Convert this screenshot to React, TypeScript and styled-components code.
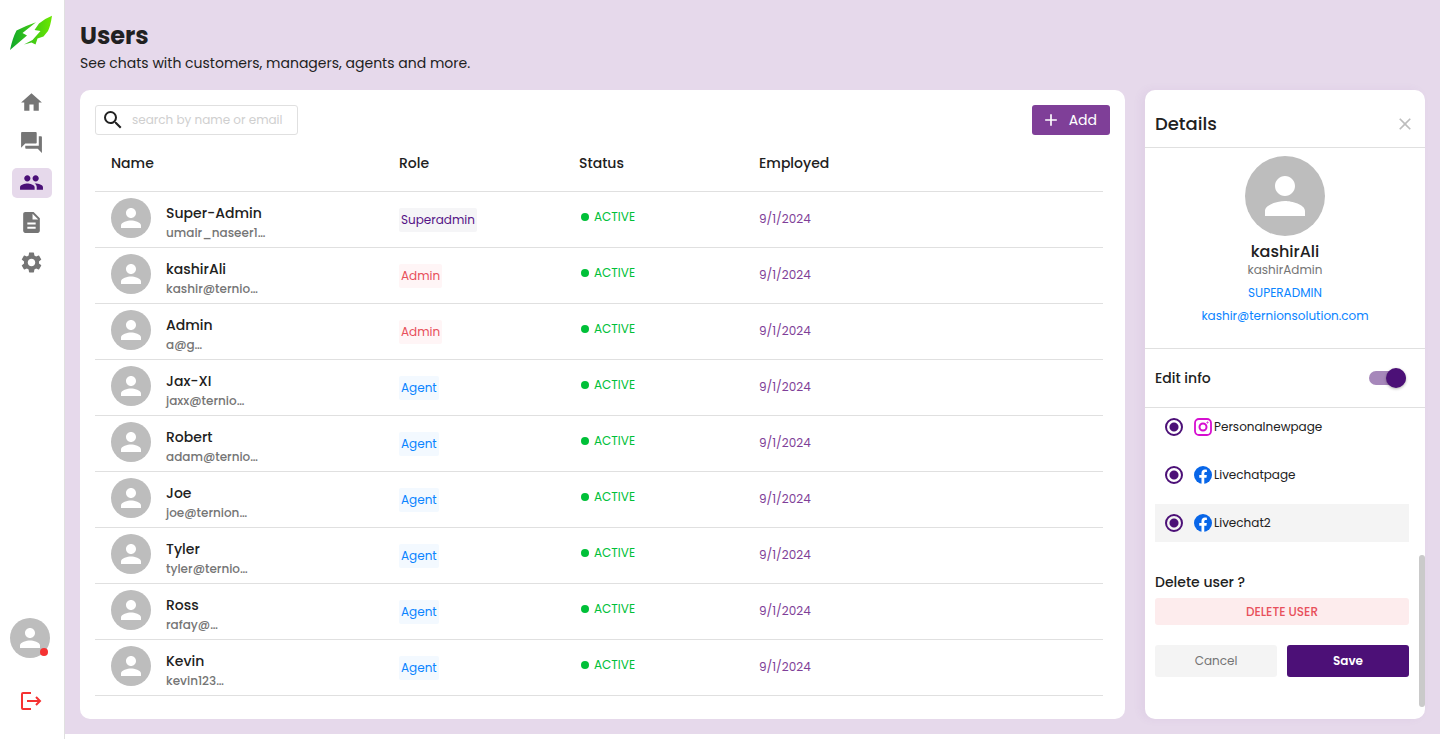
import React from "react";
import styled, { createGlobalStyle } from "styled-components";
import { MdHome, MdForum, MdPeople, MdDescription, MdSettings, MdSearch, MdPerson, MdAdd, MdClose } from "react-icons/md";

const Global = createGlobalStyle`
  *, *::before, *::after { box-sizing: border-box; }
  body { margin: 0; background: #fff; color: #212121; font-family: Poppins, Inter, "Noto Sans", sans-serif; font-size: 14px; line-height: 20px; }
  h1, h2, h3, p { margin: 0; }
  button, input { font: inherit; }
`;

const Shell = styled.div`
  display: flex;
  min-height: 100vh;
`;

const Sidebar = styled.aside`
  flex: 0 0 65px;
  display: flex;
  flex-direction: column;
  align-items: center;
  padding: 14px 0 28px;
  border-right: 1px solid #e0e0e0;
`;

const Logo = styled.svg`
  display: block;
  width: 48px;
  height: 38px;
  margin-bottom: 36px;
`;

const Nav = styled.nav`
  display: flex;
  flex-direction: column;
  gap: 10px;
  margin-bottom: auto;
`;

const NavLink = styled.a<{ $active?: boolean }>`
  display: flex;
  align-items: center;
  justify-content: center;
  width: 40px;
  height: 30px;
  padding: 0 1px 1px 0;
  border-radius: 5px;
  color: ${(p) => (p.$active ? "#4a1077" : "#757575")};
  background: ${(p) => (p.$active ? "#e6d9eb" : "transparent")};
  font-size: 25px;
`;

const Avatar = styled.span<{ $size: number }>`
  flex: none;
  display: flex;
  align-items: center;
  justify-content: center;
  width: ${(p) => p.$size}px;
  height: ${(p) => p.$size}px;
  border-radius: 50%;
  background: #bdbdbd;
  color: #fff;
  svg { width: 75%; height: 75%; }
`;

const Account = styled.div`
  position: relative;
  margin: 0 5px 33px 0;
`;

const Badge = styled.span`
  position: absolute;
  right: 2px;
  bottom: 2px;
  width: 8px;
  height: 8px;
  border-radius: 50%;
  background: #f53232;
`;

const IconButton = styled.button`
  display: flex;
  padding: 0;
  border: 0;
  background: none;
  color: #bdbdbd;
  font-size: 20px;
  cursor: pointer;
`;

const Main = styled.main`
  flex: 1;
  min-width: 0;
  display: flex;
  flex-direction: column;
  margin-bottom: 5px;
  padding: 20px 15px 15px;
  background: #e6d9eb;
`;

const Heading = styled.h1`
  font-size: 24px;
  line-height: 32px;
  font-weight: 700;
`;

const Subtitle = styled.p`
  font-size: 14px;
  line-height: 22px;
  margin-bottom: 16px;
`;

const Columns = styled.div`
  flex: 1;
  display: flex;
  gap: 20px;
`;

const Card = styled.section`
  flex: 1;
  min-width: 0;
  padding: 15px;
  border-radius: 10px;
  background: #fff;
`;

const Toolbar = styled.div`
  display: flex;
  justify-content: space-between;
`;

const SearchBox = styled.label`
  display: flex;
  align-items: center;
  gap: 7px;
  width: 203px;
  height: 30px;
  padding: 0 5px;
  border: 1px solid #e0e0e0;
  border-radius: 3px;
  svg { flex: none; font-size: 24px; }
`;

const SearchInput = styled.input`
  width: 100%;
  min-width: 0;
  padding: 0;
  border: 0;
  outline: 0;
  font-size: 12px;
  &::placeholder { color: #cfcfcf; opacity: 1; }
`;

const AddButton = styled.button`
  display: flex;
  align-items: center;
  gap: 8px;
  height: 30px;
  padding: 0 13px 0 9px;
  border: 0;
  border-radius: 3px;
  background: #7f3f98;
  color: #fff;
  font-size: 14px;
  font-weight: 400;
  svg { font-size: 20px; }
`;

const Table = styled.table`
  width: calc(100% - 7px);
  table-layout: fixed;
  border-collapse: separate;
  border-spacing: 0;
`;

const Th = styled.th<{ $width?: number }>`
  width: ${(p) => (p.$width ? p.$width + "px" : "auto")};
  height: 57px;
  padding: 0 16px;
  border-bottom: 1px solid #e0e0e0;
  text-align: left;
  font-weight: 500;
`;

const Td = styled.td`
  height: 56px;
  padding: 0 16px;
  border-bottom: 1px solid #e0e0e0;
  vertical-align: middle;
`;

const Person = styled.div`
  display: flex;
  align-items: flex-start;
  gap: 15px;
  height: 44px;
`;

const PersonText = styled.div`
  padding-top: 5px;
  min-width: 0;
`;

const PersonName = styled.div`
  font-weight: 500;
`;

const PersonMail = styled.div`
  color: #757575;
  font-size: 12px;
  font-weight: 500;
`;

type Tone = "super" | "admin" | "agent";
const tones: Record<Tone, [string, string]> = {
  super: ["#551486", "#f5f5f7"],
  admin: ["#e8505b", "#fff5f6"],
  agent: ["#0a84ff", "#f3f9ff"],
};

const Role = styled.span<{ $tone: Tone }>`
  display: inline-block;
  padding: 2px;
  border-radius: 2px;
  color: ${(p) => tones[p.$tone][0]};
  background: ${(p) => tones[p.$tone][1]};
  font-size: 12px;
`;

const Status = styled.span`
  display: flex;
  align-items: center;
  gap: 5px;
  padding: 0 0 5px 2px;
  color: #00c038;
  font-size: 12px;
  &::before {
    content: "";
    width: 8px;
    height: 8px;
    border-radius: 50%;
    background: currentColor;
  }
`;

const Joined = styled.time`
  display: block;
  padding-bottom: 2px;
  color: #7f3f98;
  font-size: 12px;
`;

const Details = styled.aside`
  position: relative;
  flex: 0 0 280px;
  border-radius: 10px;
  background: #fff;
  box-shadow: -4px 0 10px rgba(127, 63, 152, 0.06);
`;

const DetailsHeader = styled.header`
  display: flex;
  align-items: center;
  justify-content: space-between;
  height: 58px;
  padding: 10px 10px 0 10px;
  border-bottom: 1px solid #e0e0e0;
`;

const DetailsTitle = styled.h2`
  font-size: 18px;
  font-weight: 500;
`;

const Profile = styled.div`
  display: flex;
  flex-direction: column;
  align-items: center;
  height: 201px;
  padding-top: 8px;
  border-bottom: 1px solid #e0e0e0;
  font-size: 12px;
  line-height: 16px;
`;

const ProfileName = styled.h3`
  margin-top: 6px;
  font-size: 16px;
  line-height: 20px;
  font-weight: 500;
`;

const Muted = styled.p`
  color: #757575;
`;

const ProfileLink = styled.a`
  margin-top: 7px;
  color: #0a84ff;
  text-decoration: none;
`;

const EditRow = styled.label`
  display: flex;
  align-items: center;
  justify-content: space-between;
  height: 59px;
  padding: 0 19px 0 10px;
  border-bottom: 1px solid #e0e0e0;
  font-weight: 500;
`;

const Switch = styled.input`
  appearance: none;
  display: flex;
  align-items: center;
  justify-content: flex-end;
  width: 37px;
  height: 14px;
  margin: 0;
  border-radius: 7px;
  background: #a687ba;
  &::before {
    content: "";
    width: 20px;
    height: 20px;
    flex: none;
    border-radius: 50%;
    background: #4c1077;
    box-shadow: 0 1px 3px rgba(0, 0, 0, 0.3);
  }
`;

const Form = styled.form`
  padding: 0 16px 0 10px;
`;

const Pages = styled.div`
  display: flex;
  flex-direction: column;
  gap: 10px;
  margin-bottom: 30px;
`;

const PageOption = styled.label<{ $selected?: boolean }>`
  display: flex;
  align-items: center;
  height: 38px;
  padding-left: 10px;
  background: ${(p) => (p.$selected ? "#f4f4f4" : "transparent")};
  font-size: 12px;
  svg { width: 18px; height: 18px; margin: 0 2px 0 11px; }
`;

const Radio = styled.input`
  appearance: none;
  width: 18px;
  height: 18px;
  margin: 0;
  border: 2px solid #4c1077;
  border-radius: 50%;
  background: radial-gradient(circle, #4c1077 4px, transparent 5px);
`;

const FieldTitle = styled.h3`
  font-size: 14px;
  font-weight: 500;
  margin-bottom: 6px;
`;

const FormButton = styled.button<{ $kind: "danger" | "plain" | "primary" }>`
  flex: 1;
  width: 100%;
  height: ${(p) => (p.$kind === "danger" ? 27 : 32)}px;
  padding: 0;
  border: 0;
  border-radius: 3px;
  font-size: 12px;
  font-weight: ${(p) => ({ danger: 500, plain: 400, primary: 600 })[p.$kind]};
  color: ${(p) => ({ danger: "#e8505b", plain: "#757575", primary: "#fff" })[p.$kind]};
  background: ${(p) => ({ danger: "#fdeced", plain: "#f4f4f4", primary: "#4c1077" })[p.$kind]};
`;

const Actions = styled.div`
  display: flex;
  gap: 10px;
  margin-top: 20px;
`;

const ScrollThumb = styled.span`
  position: absolute;
  right: 0;
  bottom: 12px;
  width: 6px;
  height: 152px;
  border-radius: 3px;
  background: #cacaca;
`;

const users: [string, string, string, Tone][] = [
  ["Super-Admin", "umair_naseer1…", "Superadmin", "super"],
  ["kashirAli", "kashir@ternio…", "Admin", "admin"],
  ["Admin", "a@g…", "Admin", "admin"],
  ["Jax-XI", "jaxx@ternio…", "Agent", "agent"],
  ["Robert", "adam@ternio…", "Agent", "agent"],
  ["Joe", "joe@ternion…", "Agent", "agent"],
  ["Tyler", "tyler@ternio…", "Agent", "agent"],
  ["Ross", "rafay@…", "Agent", "agent"],
  ["Kevin", "kevin123…", "Agent", "agent"],
];

const navItems = [
  { label: "Home", Icon: MdHome },
  { label: "Chats", Icon: MdForum },
  { label: "Users", Icon: MdPeople, active: true },
  { label: "Reports", Icon: MdDescription },
  { label: "Settings", Icon: MdSettings },
];

const LogoMark = () => (
  <Logo viewBox="8 14 48 38" aria-label="Home" role="img">
    <defs>
      <linearGradient id="leaf" x1="0" x2="1" y1="0" y2="0">
        <stop offset="0" stopColor="#10a72c" />
        <stop offset="1" stopColor="#6be800" />
      </linearGradient>
    </defs>
    <path fill="url(#leaf)" d="M52 15.800 Q50.500 26 48 31 L43.500 36.500 L37.500 38.500 L35.500 44.500 L31.500 42.500 L24 44.500 L32.500 40 L40.500 31 L34.500 30 L39 23.500 Q44 19 52 15.800 Z M36 22.200 L22.500 33 L27 35.500 L10 50 Q12.500 38 16.500 30.500 Q25 26 36 22.200 Z" />
  </Logo>
);

const LogoutIcon = () => (
  <svg width="24" height="20" viewBox="0 0 24 20" fill="none" stroke="#f53232" strokeWidth="2">
    <path d="M11 2H3Q2 2 2 3V17Q2 18 3 18H11M7 10H20M16 6L20 10L16 14" />
  </svg>
);

const InstagramIcon = () => (
  <svg viewBox="0 0 18 18" fill="none" stroke="#d60fd0">
    <rect x="1" y="1" width="16" height="16" rx="4" strokeWidth="1.800" />
    <circle cx="9" cy="9" r="3.500" strokeWidth="2" />
    <circle cx="13.500" cy="4.500" r="0.600" />
  </svg>
);

const FacebookIcon = () => (
  <svg viewBox="0 0 24 24">
    <circle cx="12" cy="12" r="12" fill="#0866e8" />
    <path fill="#fff" d="M10 24V15.500H7V12h3V9.400c0-3 1.800-4.700 4.500-4.700 1.300 0 2.700.2 2.700.2v3h-1.500c-1.500 0-2 .9-2 1.900V12h3.400l-.5 3.500h-2.900V24z" />
  </svg>
);

export default function App() {
  return (
    <Shell>
      <Global />
      <Sidebar>
        <LogoMark />
        <Nav aria-label="Main">
          {navItems.map(({ label, Icon, active }) => (
            <NavLink key={label} href="#" aria-label={label} $active={active}><Icon /></NavLink>
          ))}
        </Nav>
        <Account>
          <Avatar $size={40}><MdPerson /></Avatar>
          <Badge />
        </Account>
        <IconButton aria-label="Log out"><LogoutIcon /></IconButton>
      </Sidebar>
      <Main>
        <Heading>Users</Heading>
        <Subtitle>See chats with customers, managers, agents and more.</Subtitle>
        <Columns>
          <Card>
            <Toolbar>
              <SearchBox>
                <MdSearch />
                <SearchInput aria-label="Search users" placeholder="search by name or email" />
              </SearchBox>
              <AddButton><MdAdd />Add</AddButton>
            </Toolbar>
            <Table>
              <thead>
                <tr>
                  <Th $width={288}>Name</Th>
                  <Th $width={180}>Role</Th>
                  <Th $width={180}>Status</Th>
                  <Th>Employed</Th>
                </tr>
              </thead>
              <tbody>
                {users.map(([name, mail, role, tone]) => (
                  <tr key={name}>
                    <Td>
                      <Person>
                        <Avatar $size={40}><MdPerson /></Avatar>
                        <PersonText>
                          <PersonName>{name}</PersonName>
                          <PersonMail>{mail}</PersonMail>
                        </PersonText>
                      </Person>
                    </Td>
                    <Td><Role $tone={tone}>{role}</Role></Td>
                    <Td><Status>ACTIVE</Status></Td>
                    <Td><Joined>9/1/2024</Joined></Td>
                  </tr>
                ))}
              </tbody>
            </Table>
          </Card>
          <Details>
            <DetailsHeader>
              <DetailsTitle>Details</DetailsTitle>
              <IconButton aria-label="Close details"><MdClose /></IconButton>
            </DetailsHeader>
            <Profile>
              <Avatar $size={80}><MdPerson /></Avatar>
              <ProfileName>kashirAli</ProfileName>
              <Muted>kashirAdmin</Muted>
              <ProfileLink href="#">SUPERADMIN</ProfileLink>
              <ProfileLink href="#">kashir@ternionsolution.com</ProfileLink>
            </Profile>
            <EditRow>
              Edit info
              <Switch type="checkbox" role="switch" defaultChecked />
            </EditRow>
            <Form>
              <Pages>
                <PageOption><Radio type="radio" name="instagram" defaultChecked /><InstagramIcon />Personalnewpage</PageOption>
                <PageOption><Radio type="radio" name="facebook" defaultChecked /><FacebookIcon />Livechatpage</PageOption>
                <PageOption $selected><Radio type="radio" name="facebook2" defaultChecked /><FacebookIcon />Livechat2</PageOption>
              </Pages>
              <FieldTitle>Delete user ?</FieldTitle>
              <FormButton type="button" $kind="danger">DELETE USER</FormButton>
              <Actions>
                <FormButton type="button" $kind="plain">Cancel</FormButton>
                <FormButton type="submit" $kind="primary">Save</FormButton>
              </Actions>
            </Form>
            <ScrollThumb />
          </Details>
        </Columns>
      </Main>
    </Shell>
  );
}
